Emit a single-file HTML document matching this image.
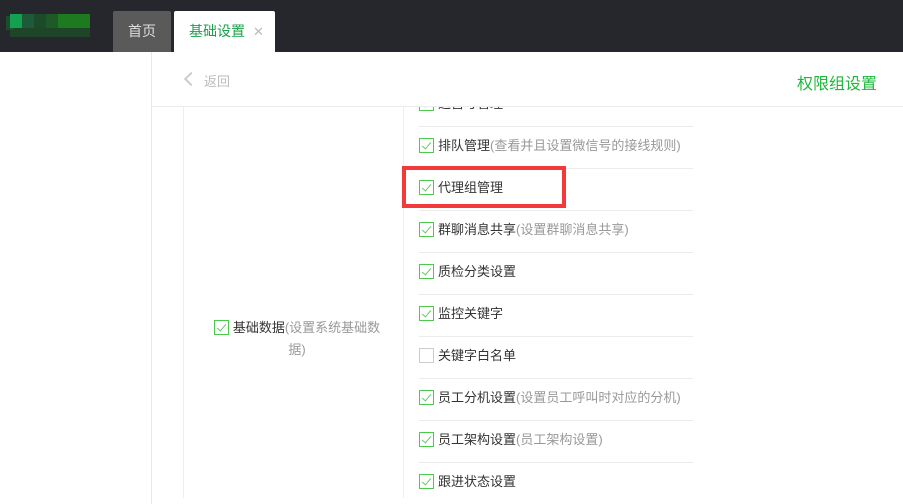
<!DOCTYPE html>
<html><head><meta charset="utf-8"><style>
*{margin:0;padding:0;box-sizing:border-box}
body{width:903px;height:504px;overflow:hidden;background:#fff;font-family:"Liberation Sans","Noto Sans CJK SC",sans-serif;font-size:13px;color:#333;position:relative}
.top{position:absolute;left:0;top:0;width:903px;height:52px;background:#25272c}
.logo{position:absolute;top:14px;height:14px;width:12px}
.tab1{position:absolute;left:113px;top:11px;width:58px;height:41px;background:#5a5a5a;color:#ddd;font-size:14px;line-height:41px;text-align:center;border-radius:2px 2px 0 0}
.tab2{position:absolute;left:174px;top:11px;width:101px;height:41px;background:#fff;color:#1aa04a;font-size:14px;line-height:41px;padding-left:15px;border-radius:2px 2px 0 0}
.tab2 span{color:#bbb;margin-left:8px;font-size:13px}
.vl{position:absolute;width:1px;background:#e8e8e8}
.hl{position:absolute;height:1px;background:#ebebeb}
.chev{position:absolute;left:186px;top:74px;width:10px;height:10px;border-left:2px solid #ccc;border-bottom:2px solid #ccc;transform:rotate(45deg)}
.back{position:absolute;left:204px;top:71px;color:#bbb;font-size:13px}
.title{position:absolute;left:797px;top:70px;color:#1db83c;font-size:16px}
.row{position:absolute;left:419px;height:42px;width:274px;line-height:42px;white-space:nowrap}
.row i{color:#999;font-style:normal}
.cb{display:inline-block;width:15px;height:15px;border:1px solid #4ac94a;vertical-align:-3px;margin-right:4px;position:relative}
.cb:after{content:"";position:absolute;left:4px;top:1px;width:4px;height:8px;border-right:1px solid #66c866;border-bottom:1px solid #66c866;transform:rotate(40deg)}
.cb.no{border-color:#ccc}.cb.no:after{display:none}
.line{position:absolute;left:419px;width:274px;height:1px;background:#ececec}
</style></head><body>
<div class="top">
<div class="logo" style="left:6px;background:#1a4d2e;width:8px;top:16px"></div>
<div class="logo" style="left:10px;background:#13a050"></div>
<div class="logo" style="left:22px;background:#1c5a3a"></div>
<div class="logo" style="left:34px;background:#1d4a2a"></div>
<div class="logo" style="left:46px;background:#1e5a28"></div>
<div class="logo" style="left:58px;background:#1e7a1e;width:32px"></div>
<div class="logo" style="left:10px;top:28px;background:#1c5a26;height:9px;width:80px;opacity:.6"></div>
<div class="tab1">首页</div>
<div class="tab2">基础设置<span>✕</span></div>
</div>
<div class="vl" style="left:151px;top:52px;height:452px"></div>
<div class="chev"></div>
<div class="back">返回</div>
<div class="title">权限组设置</div>
<div class="hl" style="left:152px;top:106px;width:751px"></div>
<div class="vl" style="left:183px;top:107px;height:391px;background:#eee"></div>
<div class="vl" style="left:403px;top:107px;height:391px;background:#eee"></div>
<div style="position:absolute;left:207px;top:317px;width:180px;text-align:center;line-height:22px"><span class="cb"></span>基础数据<span style="color:#999">(设置系统基础数据)</span></div>
<div style="position:absolute;left:0;top:107px;width:903px;height:397px;overflow:hidden">
<div class="row" style="top:-24px"><span class="cb"></span>运营号管理</div>
<div class="line" style="top:19px"></div>
<div class="row" style="top:18px"><span class="cb"></span>排队管理<i>(查看并且设置微信号的接线规则)</i></div>
<div class="line" style="top:61px"></div>
<div class="row" style="top:60px"><span class="cb"></span>代理组管理</div>
<div class="line" style="top:103px"></div>
<div class="row" style="top:102px"><span class="cb"></span>群聊消息共享<i>(设置群聊消息共享)</i></div>
<div class="line" style="top:145px"></div>
<div class="row" style="top:144px"><span class="cb"></span>质检分类设置</div>
<div class="line" style="top:187px"></div>
<div class="row" style="top:186px"><span class="cb"></span>监控关键字</div>
<div class="line" style="top:229px"></div>
<div class="row" style="top:228px"><span class="cb no"></span>关键字白名单</div>
<div class="line" style="top:271px"></div>
<div class="row" style="top:270px"><span class="cb"></span>员工分机设置<i>(设置员工呼叫时对应的分机)</i></div>
<div class="line" style="top:313px"></div>
<div class="row" style="top:312px"><span class="cb"></span>员工架构设置<i>(员工架构设置)</i></div>
<div class="line" style="top:355px"></div>
<div class="row" style="top:354px"><span class="cb"></span>跟进状态设置</div>
</div>
<div style="position:absolute;left:402px;top:166px;width:164px;height:42px;border:4px solid #f23a3a"></div>
</body></html>
